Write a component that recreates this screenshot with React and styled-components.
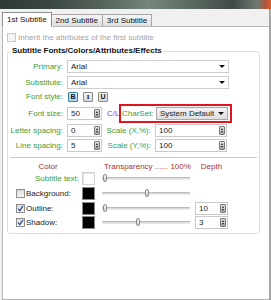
import styled, { createGlobalStyle } from 'styled-components';

const GlobalStyle = createGlobalStyle`
  html, body { margin: 0; padding: 0; }
  body {
    width: 271px;
    height: 300px;
    overflow: hidden;
    background: #f0f0f0;
    font-family: "Liberation Sans", Arial, sans-serif;
    font-size: 8px;
    color: #222;
  }
`;

const Window = styled.div`
  display: flex;
  flex-direction: column;
  height: 300px;
`;

const Backdrop = styled.div`
  height: 9px;
  background: linear-gradient(90deg, #2f3935 0%, #3b4641 18%, #55645b 38%, #75867b 55%, #5c6b62 70%, #3f4b46 86%, #6d7b73 95%, #b0553a 98%, #d4622c 100%);
`;

const Dialog = styled.div`
  flex: 1;
  display: flex;
  flex-direction: column;
  padding: 3px 0 0 2px;
  border-right: 2px solid #a4a4a4;
`;

const TabBar = styled.div`
  display: flex;
  align-items: flex-end;
  height: 14px;
`;

const Tab = styled.div`
  box-sizing: border-box;
  height: ${p => (p.$active ? 15 : 12)}px;
  line-height: ${p => (p.$active ? 13 : 11)}px;
  padding: 0 4px;
  margin-bottom: ${p => (p.$active ? -1 : 0)}px;
  margin-left: ${p => (p.$active ? 0 : -1)}px;
  border: 1px solid ${p => (p.$active ? '#8e8f8f' : '#a7a7a7')};
  border-bottom: ${p => (p.$active ? '1px solid #fff' : 'none')};
  background: ${p => (p.$active ? '#fff' : 'linear-gradient(#f5f5f5, #e0e0e0)')};
  color: #111;
  position: relative;
  z-index: ${p => (p.$active ? 2 : 1)};
  white-space: nowrap;
  &:first-child { margin-left: 0; }
`;

const Panel = styled.div`
  flex: 1;
  background: #fff;
  border: 1px solid #b6b6b6;
  border-right: none;
  padding: 6px 9px 0 4px;
`;

const CheckRow = styled.div`
  display: flex;
  align-items: center;
  height: 9px;
  color: ${p => (p.$disabled ? '#a3a3a3' : '#222')};
`;

const Box = styled.span`
  box-sizing: border-box;
  width: 9px;
  height: 9px;
  flex: none;
  display: flex;
  align-items: center;
  justify-content: center;
  border: 1px solid ${p => (p.$disabled ? '#c8c8c8' : '#8e8e8e')};
  background: ${p => (p.$disabled ? '#f6f6f6' : 'linear-gradient(#dcdcdc, #f8f8f8)')};
  margin-right: ${p => p.$gap || 1}px;
`;

const Group = styled.fieldset`
  margin: 4px 0 0 0;
  padding: 4px 0 4px 0;
  border: 1px solid #d8dfe3;
  border-radius: 3px;
  min-width: 0;
`;

const Legend = styled.legend`
  font-weight: bold;
  line-height: 10px;
  padding: 0 2px;
  margin-left: 2px;
  color: #111;
`;

const FieldRow = styled.div`
  display: flex;
  align-items: center;
  height: ${p => p.$h || 13}px;
  margin-top: ${p => p.$mt || 0}px;
`;

const Label = styled.span`
  width: 55px;
  margin-right: 4px;
  text-align: right;
  color: #3d9c3a;
  white-space: nowrap;
`;

const Select = styled.div`
  box-sizing: border-box;
  width: ${p => p.$w}px;
  height: 13px;
  border: 1px solid ${p => (p.$button ? '#a9a9a9' : '#cdcdcd')};
  background: ${p => (p.$button ? 'linear-gradient(#f3f3f3, #dedede)' : '#fff')};
  display: flex;
  align-items: center;
  justify-content: space-between;
  padding: 0 3px 0 3px;
  color: #222;
  white-space: nowrap;
`;

const Caret = styled.span`
  width: 0;
  height: 0;
  border-left: 3px solid transparent;
  border-right: 3px solid transparent;
  border-top: 3px solid #111;
`;

const StyleButtons = styled.div`
  display: flex;
  gap: 5px;
  margin-left: 1px;
`;

const StyleButton = styled.span`
  box-sizing: border-box;
  width: 10px;
  height: 10px;
  display: flex;
  align-items: center;
  justify-content: center;
  font-weight: bold;
  font-size: 7px;
  border: 1px solid ${p => (p.$on ? '#3c7fb1' : '#8a8a8a')};
  border-radius: 1px;
  background: ${p => (p.$on ? 'linear-gradient(#d9eefb, #a9d3f0)' : 'linear-gradient(#f4f4f4, #d8d8d8)')};
  color: #111;
  font-family: ${p => (p.$serif ? '"Liberation Serif", serif' : 'inherit')};
`;

const SpinBox = styled.div`
  box-sizing: border-box;
  width: ${p => p.$w}px;
  height: 13px;
  border: 1px solid #c9c9c9;
  background: #fff;
  display: flex;
  align-items: center;
  justify-content: space-between;
  padding: 0 1px 0 3px;
  color: #222;
`;

const Spinner = styled.span`
  box-sizing: border-box;
  width: 6px;
  height: 9px;
  border: 1px solid #777;
  border-radius: 1px;
  background: linear-gradient(#e6e6e6, #a8a8a8);
  display: flex;
  flex-direction: column;
  align-items: center;
  justify-content: space-around;
`;

const SpinArrow = styled.span`
  width: 0;
  height: 0;
  border-left: 1.5px solid transparent;
  border-right: 1.5px solid transparent;
  ${p => (p.$up ? 'border-bottom: 2px solid #222;' : 'border-top: 2px solid #222;')}
`;

const Unit = styled.span`
  width: 12px;
  margin-left: 5px;
  color: #9a3bbd;
  white-space: nowrap;
`;

const Highlight = styled.div`
  box-sizing: border-box;
  width: 113px;
  height: 19px;
  border: 2px solid #e3131f;
  display: flex;
  align-items: center;
  padding-left: 1px;
`;

const SubLabel = styled.span`
  width: ${p => p.$w}px;
  margin-right: ${p => p.$gap}px;
  text-align: ${p => p.$align || 'left'};
  color: #3d9c3a;
  white-space: nowrap;
`;

const Separator = styled.div`
  height: 1px;
  margin: 5px 2px 0 2px;
  background: #c9c9c9;
`;

const ColorGrid = styled.div`
  display: grid;
  grid-template-columns: 74px 20px 93px 33px;
  align-items: center;
  height: ${p => p.$h || 13}px;
  margin-top: ${p => p.$mt || 0}px;
`;

const Heading = styled.span`
  color: #a83236;
  white-space: nowrap;
  text-align: ${p => p.$align || 'left'};
  padding-left: ${p => p.$pl || 0}px;
`;

const NameCell = styled.div`
  display: flex;
  align-items: center;
  justify-content: ${p => (p.$right ? 'flex-end' : 'flex-start')};
  padding: ${p => (p.$right ? '0 3px 0 0' : '0 0 0 8px')};
  color: ${p => (p.$right ? '#3d9c3a' : '#222')};
  white-space: nowrap;
`;

const Swatch = styled.span`
  box-sizing: border-box;
  width: 13px;
  height: 13px;
  background: ${p => p.$color};
  border: 1px solid ${p => (p.$color === '#000' ? '#8a8a8a' : '#d2d2d2')};
  box-shadow: ${p => (p.$color === '#000' ? 'none' : 'inset 1px 1px 0 #e4e4e4')};
`;

const SliderWrap = styled.div`
  position: relative;
  width: 88px;
  height: 13px;
  display: flex;
  align-items: center;
`;

const Track = styled.div`
  box-sizing: border-box;
  width: 100%;
  height: 3px;
  border-top: 1px solid #b9b9b9;
  border-bottom: 1px solid #eaeaea;
  background: #dcdcdc;
  border-radius: 1px;
`;

const Thumb = styled.span`
  position: absolute;
  top: 2px;
  box-sizing: border-box;
  width: 4px;
  height: 8px;
  border: 1px solid #8c8c8c;
  border-radius: 2px;
  background: linear-gradient(#f6f6f6, #cfcfcf);
`;

const Check = () => (
  <svg width="7" height="7" viewBox="0 0 7 7">
    <path d="M1 3.6 L2.8 5.6 L6 1" fill="none" stroke="#2c4f9e" strokeWidth="1.3" />
  </svg>
);

const Spin = ({ value, w }) => (
  <SpinBox $w={w}>
    <span>{value}</span>
    <Spinner>
      <SpinArrow $up />
      <SpinArrow />
    </Spinner>
  </SpinBox>
);

const Slider = ({ pos }) => (
  <SliderWrap>
    <Track />
    <Thumb style={{ left: pos }} />
  </SliderWrap>
);

const effects = [
  { name: 'Background', checked: false, pos: 43 },
  { name: 'Outline', checked: true, pos: 1, depth: '10' },
  { name: 'Shadow', checked: true, pos: 34, depth: '3' },
];

export default function App() {
  return (
    <Window>
      <GlobalStyle />
      <Backdrop />
      <Dialog>
        <TabBar>
          <Tab $active>1st Subtitle</Tab>
          <Tab>2nd Subtitle</Tab>
          <Tab>3rd Subtitle</Tab>
        </TabBar>
        <Panel>
          <CheckRow $disabled>
            <Box $disabled $gap={2} />
            Inherit the attributes of the first subtitle
          </CheckRow>
          <Group>
            <Legend>Subtitle Fonts/Colors/Attributes/Effects</Legend>
            <FieldRow>
              <Label>Primary:</Label>
              <Select $w={162}>
                Arial
                <Caret />
              </Select>
            </FieldRow>
            <FieldRow $mt={3}>
              <Label>Substitute:</Label>
              <Select $w={162}>
                Arial
                <Caret />
              </Select>
            </FieldRow>
            <FieldRow $mt={1}>
              <Label>Font style:</Label>
              <StyleButtons>
                <StyleButton $on>B</StyleButton>
                <StyleButton $serif>I</StyleButton>
                <StyleButton>U</StyleButton>
              </StyleButtons>
            </FieldRow>
            <FieldRow $mt={1} $h={19}>
              <Label>Font size:</Label>
              <Spin value="50" w={35} />
              <Unit>C/L</Unit>
              <Highlight>
                <SubLabel $w={34} $gap={0}>CharSet:</SubLabel>
                <Select $w={72} $button>
                  System Default
                  <Caret />
                </Select>
              </Highlight>
            </FieldRow>
            <FieldRow $mt={1}>
              <Label>Letter spacing:</Label>
              <Spin value="0" w={35} />
              <SubLabel $w={49} $gap={4} $align="right">Scale (X,%):</SubLabel>
              <Spin value="100" w={72} />
            </FieldRow>
            <FieldRow $mt={2}>
              <Label>Line spacing:</Label>
              <Spin value="5" w={35} />
              <SubLabel $w={49} $gap={4} $align="right">Scale (Y,%):</SubLabel>
              <Spin value="100" w={72} />
            </FieldRow>
            <Separator />
            <ColorGrid $mt={3} $h={10}>
              <Heading $align="center" $pl={6}>Color</Heading>
              <span />
              <Heading $pl={2}>Transparency ...... 100%</Heading>
              <Heading $align="center">Depth</Heading>
            </ColorGrid>
            <ColorGrid $mt={1}>
              <NameCell $right>Subtitle text:</NameCell>
              <Swatch $color="#fff" />
              <Slider pos={1} />
              <span />
            </ColorGrid>
            {effects.map((e, i) => (
              <ColorGrid key={e.name} $mt={i === 2 ? 1 : 2}>
                <NameCell>
                  <Box>{e.checked && <Check />}</Box>
                  {e.name}:
                </NameCell>
                <Swatch $color="#000" />
                <Slider pos={e.pos} />
                {e.depth ? <Spin value={e.depth} w={33} /> : <span />}
              </ColorGrid>
            ))}
          </Group>
        </Panel>
      </Dialog>
    </Window>
  );
}
